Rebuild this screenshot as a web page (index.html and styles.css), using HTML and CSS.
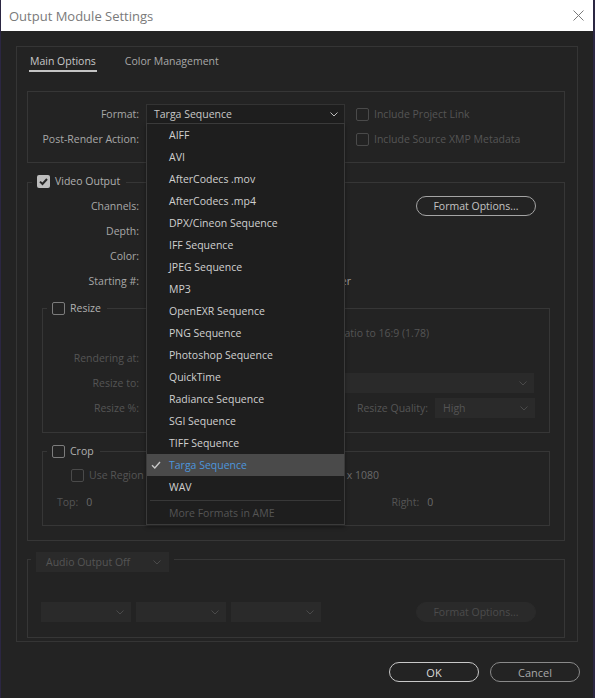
FILE: index.html
```html
<!DOCTYPE html>
<html>
<head>
<meta charset="utf-8">
<title>Output Module Settings</title>
<link rel="stylesheet" href="styles.css">
</head>
<body>
<div class="window">
  <div class="titlebar">
    <span class="title">Output Module Settings</span>
    <svg class="close" viewBox="0 0 11 11" width="11" height="11"><path d="M0.5 0.5L10.5 10.5M10.5 0.5L0.5 10.5" stroke="#7a7a7a" stroke-width="1" fill="none"/></svg>
  </div>
  <div class="main">
    <div class="panel">
      <div class="tabs">
        <span class="tab active">Main Options</span>
        <span class="tab">Color Management</span>
      </div>

      <div class="box format-box">
        <div class="row">
          <span class="lbl">Format:</span>
          <div class="select format-select">
            <span>Targa Sequence</span>
            <svg class="chev" viewBox="0 0 8 5" width="8" height="5"><path d="M0.5 0.5L4 4L7.5 0.5" stroke="#bdbdbd" fill="none"/></svg>
            <ul class="menu">
              <li>AIFF</li>
              <li>AVI</li>
              <li>AfterCodecs .mov</li>
              <li>AfterCodecs .mp4</li>
              <li>DPX/Cineon Sequence</li>
              <li>IFF Sequence</li>
              <li>JPEG Sequence</li>
              <li>MP3</li>
              <li>OpenEXR Sequence</li>
              <li>PNG Sequence</li>
              <li>Photoshop Sequence</li>
              <li>QuickTime</li>
              <li>Radiance Sequence</li>
              <li>SGI Sequence</li>
              <li>TIFF Sequence</li>
              <li class="sel"><svg class="tick" viewBox="0 0 10 10" width="10" height="10"><path d="M1 5.2L3.8 8L9 2" stroke="#c8c8c8" stroke-width="1.4" fill="none"/></svg>Targa Sequence</li>
              <li>WAV</li>
              <li class="sep"></li>
              <li class="more">More Formats in AME</li>
            </ul>
          </div>
          <span class="cb dis"><i class="box13"></i>Include Project Link</span>
        </div>
        <div class="row">
          <span class="lbl">Post-Render Action:</span>
          <div class="select"></div>
          <span class="cb dis"><i class="box13"></i>Include Source XMP Metadata</span>
        </div>
      </div>

      <div class="group video">
        <div class="ghead"><i class="box13 on"><svg viewBox="0 0 13 13" width="13" height="13"><path d="M3 6.6L5.5 9L10 4" stroke="#262626" stroke-width="2" fill="none"/></svg></i><span class="gtitle">Video Output</span></div>
        <div class="vrows">
          <div class="row">
            <span class="lbl">Channels:</span>
            <div class="select"></div>
            <button class="pill">Format Options...</button>
          </div>
          <div class="row">
            <span class="lbl">Depth:</span>
            <div class="select"></div>
          </div>
          <div class="row">
            <span class="lbl">Color:</span>
            <div class="select"></div>
          </div>
          <div class="row">
            <span class="lbl">Starting #:</span>
            <div class="start-tail"><span class="cb">Use Comp Frame Number</span></div>
          </div>
        </div>

        <div class="group sub resize">
          <div class="ghead"><i class="box13 lit"></i><span class="gtitle">Resize</span></div>
          <div class="srows">
            <div class="row"><span class="aspect">Lock Aspect Ratio to 16:9 (1.78)</span></div>
            <div class="row"><span class="lbl s dim">Rendering at:</span></div>
            <div class="row"><span class="lbl s dim">Resize to:</span><div class="select dsel wide"><svg class="chev" viewBox="0 0 8 5" width="8" height="5"><path d="M0.5 0.5L4 4L7.5 0.5" stroke="#4a4a4a" fill="none"/></svg></div></div>
            <div class="row"><span class="lbl s dim">Resize %:</span><span class="quality"><span class="dim">Resize Quality:</span><span class="select dsel q"><span>High</span><svg class="chev" viewBox="0 0 8 5" width="8" height="5"><path d="M0.5 0.5L4 4L7.5 0.5" stroke="#4a4a4a" fill="none"/></svg></span></span></div>
          </div>
        </div>

        <div class="group sub crop">
          <div class="ghead"><i class="box13 lit"></i><span class="gtitle">Crop</span></div>
          <div class="crows">
            <div class="row roi"><span class="cb dis"><i class="box13"></i>Use Region</span><span class="dim2 region">x 1080</span></div>
            <div class="row edges">
              <span class="edge"><span class="dim">Top:</span><span class="dim2">0</span></span>
              <span class="edge"></span>
              <span class="edge"></span>
              <span class="edge"><span class="dim">Right:</span><span class="dim2">0</span></span>
            </div>
          </div>
        </div>
      </div>

      <div class="group audio">
        <div class="ghead"><span class="select dsel ahead"><span>Audio Output Off</span><svg class="chev" viewBox="0 0 8 5" width="8" height="5"><path d="M0.5 0.5L4 4L7.5 0.5" stroke="#4a4a4a" fill="none"/></svg></span></div>
        <div class="row arow">
          <span class="select dsel small"><svg class="chev" viewBox="0 0 8 5" width="8" height="5"><path d="M0.5 0.5L4 4L7.5 0.5" stroke="#4a4a4a" fill="none"/></svg></span>
          <span class="select dsel small"><svg class="chev" viewBox="0 0 8 5" width="8" height="5"><path d="M0.5 0.5L4 4L7.5 0.5" stroke="#4a4a4a" fill="none"/></svg></span>
          <span class="select dsel small"><svg class="chev" viewBox="0 0 8 5" width="8" height="5"><path d="M0.5 0.5L4 4L7.5 0.5" stroke="#4a4a4a" fill="none"/></svg></span>
          <button class="pill off">Format Options...</button>
        </div>
      </div>
    </div>
    <div class="actions">
      <button class="btn ok">OK</button>
      <button class="btn">Cancel</button>
    </div>
  </div>
</div>
</body>
</html>
```
FILE: styles.css
```css
* { box-sizing: border-box; }
html, body { margin: 0; padding: 0; }
body {
  background: #2b2642;
  font-family: "Open Sans", "Noto Sans", sans-serif;
  font-size: 10.5px;
  color: #a8a8a8;
}
.window {
  margin-left: 1px;
  width: 592px;
  height: 698px;
  background: #232323;
}
.titlebar {
  height: 31px;
  background: #ffffff;
  display: flex;
  align-items: center;
  justify-content: space-between;
  padding: 0 9px 0 8px;
}
.title {
  font-size: 13px;
  color: #7a7a7a;
}
.close { display: block; }
.main { padding: 15px 0 0 15px; }
.panel {
  width: 562px;
  height: 596px;
  border: 1px solid #353535;
  padding: 6px 12px 0 10px;
}
.tabs {
  display: flex;
  gap: 27px;
  margin-left: 2px;
}
.tab {
  line-height: 16px;
  padding: 0 1px 1px;
  border-bottom: 2px solid transparent;
  color: #a8a8a8;
}
.tab.active {
  color: #c8c8c8;
  border-bottom-color: #c4c4c4;
}
.box, .group {
  border: 1px solid #363636;
}
.format-box {
  margin-top: 19px;
  padding: 12px 0 13px;
}
.row {
  display: flex;
  align-items: center;
  height: 20px;
  white-space: nowrap;
}
.format-box .row + .row { margin-top: 5px; }
.lbl {
  width: 111px;
  text-align: right;
  margin-right: 7px;
  flex: none;
}
.lbl.s { width: 96px; }
.select {
  position: relative;
  display: flex;
  align-items: center;
  justify-content: space-between;
  width: 199px;
  height: 20px;
  padding: 0 6px 0 7px;
  background: #1e1e1e;
  border: 1px solid #333333;
  color: #c8c8c8;
  flex: none;
}
.format-select { z-index: 10; }
.chev { display: block; flex: none; }
.cb {
  display: inline-flex;
  align-items: center;
  gap: 5px;
  color: #a0a0a0;
}
.format-box .cb { margin-left: 11px; }
.cb.dis { color: #555555; }
.box13 {
  display: inline-block;
  width: 13px;
  height: 13px;
  border: 1.5px solid #4a4a4a;
  border-radius: 2px;
  flex: none;
}
.box13.lit { border-color: #7c7c7c; }
.box13.on {
  border: none;
  background: #bdbdbd;
}
.box13.on svg { display: block; }
.menu {
  position: absolute;
  left: -1px;
  top: 18px;
  width: 199px;
  margin: 0;
  padding: 0;
  list-style: none;
  background: #1e1e1e;
  border: 1px solid #3a3a3a;
  box-shadow: 0 2px 4px rgba(0,0,0,0.4);
}
.menu li {
  position: relative;
  height: 22px;
  line-height: 22px;
  padding-left: 22px;
  color: #d0d0d0;
}
.menu li.sel {
  background: #4a4a4a;
  color: #4d96dd;
}
.tick {
  position: absolute;
  left: 4px;
  top: 6px;
}
.menu li.sep {
  height: 1px;
  margin: 2px 3px;
  padding: 0;
  background: #383838;
}
.menu li.more {
  color: #555555;
  height: 21px;
  line-height: 21px;
}

.group { width: 538px; }
.ghead {
  display: flex;
  align-items: center;
  width: max-content;
  height: 16px;
  margin: -9px 0 0 4px;
  padding: 0 6px 0 5px;
  background: #232323;
  gap: 5px;
}
.gtitle { color: #b0b0b0; }
.video {
  margin-top: 19px;
  padding-bottom: 14px;
}
.video > .ghead { margin-top: -10px; }
.vrows {
  display: flex;
  flex-direction: column;
  gap: 5px;
  margin-top: 7px;
  padding-right: 28px;
}
.pill {
  margin-left: auto;
  width: 120px;
  height: 20px;
  border: 1px solid #a4a4a4;
  border-radius: 10px;
  background: transparent;
  color: #c4c4c4;
  font: inherit;
  padding: 0;
}
.pill.off {
  border-color: #2a2a2a;
  background: #2a2a2a;
  color: #4c4c4c;
}
.start-tail {
  width: 205px;
  display: flex;
  justify-content: flex-end;
  align-items: center;
}

.sub {
  margin: 0 14px;
  width: auto;
}
.resize { margin-top: 17px; padding-bottom: 14px; }
.srows {
  display: flex;
  flex-direction: column;
  gap: 5px;
  margin-top: 7px;
}
.aspect {
  width: 386px;
  text-align: right;
  color: #555555;
}
.dim { color: #555555; }
.dim2 { color: #6a6a6a; }
.dsel {
  background: #2a2a2a;
  border-color: #2a2a2a;
  color: #555555;
}
.wide { width: 388px; justify-content: flex-end; }
.quality {
  margin-left: auto;
  margin-right: 14px;
  display: flex;
  align-items: center;
  gap: 7px;
}
.q { width: 100px; }

.crop { margin-top: 18px; padding-bottom: 13px; }
.crows { margin-top: 6px; }
.roi {
  width: 336px;
  padding-left: 28px;
}
.region { margin-left: auto; }
.edges {
  margin-top: 7px;
  padding-left: 14px;
  display: grid;
  grid-template-columns: repeat(4, 111.5px);
}
.edge { display: flex; gap: 8px; }

.audio {
  margin-top: 18px;
  padding-bottom: 15px;
}
.audio > .ghead {
  height: 20px;
  margin: -8px 0 0 3px;
  padding: 0 5px;
}
.ahead { width: 133px; padding: 0 7px 0 9px; }
.arow {
  margin-top: 30px;
  padding-left: 13px;
  gap: 5px;
  padding-right: 28px;
}
.small { width: 90px; justify-content: flex-end; padding-right: 6px; }

.actions {
  display: flex;
  justify-content: flex-end;
  gap: 11px;
  margin-top: 20px;
  padding-right: 13px;
}
.btn {
  width: 90px;
  height: 20px;
  border: 1px solid #8a8a8a;
  border-radius: 10px;
  background: transparent;
  color: #a8a8a8;
  font: inherit;
  font-size: 11px;
  padding: 0;
}
.btn.ok {
  border-color: #c8c8c8;
  color: #dadada;
}
```
